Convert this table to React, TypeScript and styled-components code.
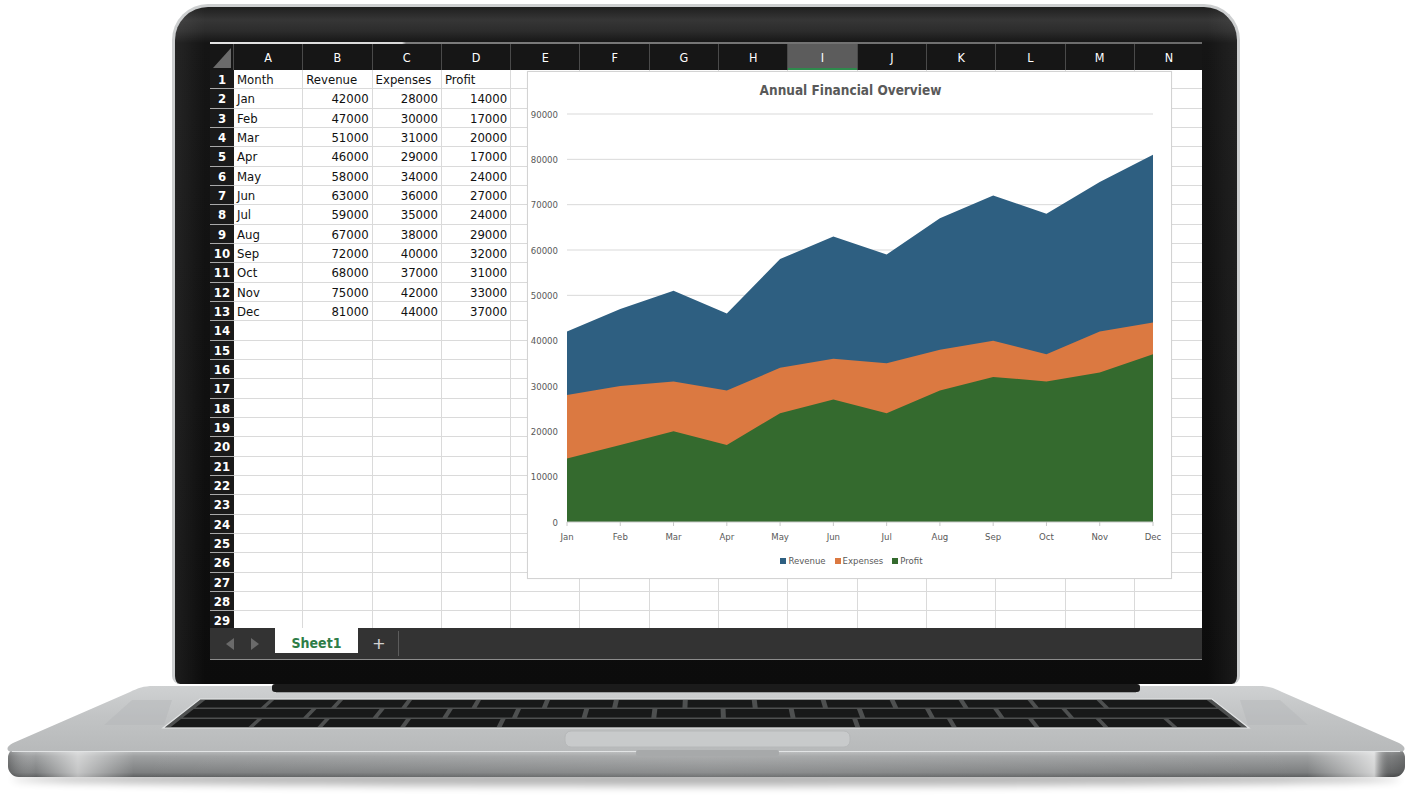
import React from "react";
import styled, { createGlobalStyle } from "styled-components";

const FONT = `"Liberation Sans Narrow", "DejaVu Sans Condensed", "Liberation Sans", sans-serif`;

const COLUMNS = ["A", "B", "C", "D", "E", "F", "G", "H", "I", "J", "K", "L", "M", "N"];
const SELECTED_COLUMN = "I";
const ROW_COUNT = 29;
const ROW_HEAD_WIDTH = 24;
const COL_WIDTH = 69.3;
const ROW_HEIGHT = 19.33;

const DATA = [
    { month: "Jan", revenue: 42000, expenses: 28000, profit: 14000 },
    { month: "Feb", revenue: 47000, expenses: 30000, profit: 17000 },
    { month: "Mar", revenue: 51000, expenses: 31000, profit: 20000 },
    { month: "Apr", revenue: 46000, expenses: 29000, profit: 17000 },
    { month: "May", revenue: 58000, expenses: 34000, profit: 24000 },
    { month: "Jun", revenue: 63000, expenses: 36000, profit: 27000 },
    { month: "Jul", revenue: 59000, expenses: 35000, profit: 24000 },
    { month: "Aug", revenue: 67000, expenses: 38000, profit: 29000 },
    { month: "Sep", revenue: 72000, expenses: 40000, profit: 32000 },
    { month: "Oct", revenue: 68000, expenses: 37000, profit: 31000 },
    { month: "Nov", revenue: 75000, expenses: 42000, profit: 33000 },
    { month: "Dec", revenue: 81000, expenses: 44000, profit: 37000 },
];

const SERIES = [
    { key: "revenue" as const, label: "Revenue", color: "#2e5f81" },
    { key: "expenses" as const, label: "Expenses", color: "#db7941" },
    { key: "profit" as const, label: "Profit", color: "#346a2e" },
];

const GlobalStyle = createGlobalStyle`
    html, body {
        margin: 0;
        padding: 0;
        background: #ffffff;
    }
    body {
        font-family: ${FONT};
    }
`;

const Page = styled.div`
    width: 1412px;
    height: 800px;
    overflow: hidden;
    display: flex;
    flex-direction: column;
    align-items: center;
`;

const Lid = styled.div`
    box-sizing: border-box;
    width: 1068px;
    height: 680px;
    margin-top: 4px;
    padding: 35px 35px 0;
    border: 3px solid #cdcfd0;
    border-bottom: none;
    border-radius: 36px 36px 8px 8px;
    background:
        linear-gradient(90deg, rgba(255, 255, 255, 0.07) 0px, rgba(255, 255, 255, 0) 30px,
            rgba(255, 255, 255, 0) 1032px, rgba(255, 255, 255, 0.06) 1062px),
        linear-gradient(180deg, #1f1f1f 0px, #363636 13px, #2c2c2c 24px, #151515 36px, #0c0c0c 100%);
`;

const Screen = styled.div`
    width: 992px;
    height: 618px;
    display: flex;
    flex-direction: column;
    overflow: hidden;
    background: #ffffff;
`;

const TopEdge = styled.div`
    height: 2px;
    background: linear-gradient(90deg, #e4e4e4 0px, #d8d8d8 192px, #7c7c7c 196px, #6a6a6a 100%);
`;

const HeaderRow = styled.div`
    display: grid;
    grid-template-columns: ${ROW_HEAD_WIDTH}px repeat(${COLUMNS.length}, ${COL_WIDTH}px);
    height: 26px;
    background: #161616;
`;

const CornerCell = styled.div`
    position: relative;
    border-right: 1px solid #4a4a4a;
    &::after {
        content: "";
        position: absolute;
        right: 2px;
        bottom: 2px;
        width: 18px;
        height: 20px;
        background: #6b6b6b;
        clip-path: polygon(100% 0, 100% 100%, 0 100%);
    }
`;

const ColumnHead = styled.div<{ $selected?: boolean }>`
    box-sizing: border-box;
    display: flex;
    align-items: center;
    justify-content: center;
    color: #ffffff;
    font-size: 12.5px;
    border-right: 1px solid #4a4a4a;
    background: ${(p) => (p.$selected ? "#5c5c5c" : "transparent")};
    box-shadow: ${(p) => (p.$selected ? "inset 0 -2px 0 #2e8a4c" : "none")};
`;

const SheetArea = styled.div`
    position: relative;
    height: 558px;
    overflow: hidden;
    background: #ffffff;
`;

const CellGrid = styled.div`
    display: grid;
    grid-template-columns: ${ROW_HEAD_WIDTH}px repeat(${COLUMNS.length}, ${COL_WIDTH}px);
    grid-auto-rows: ${ROW_HEIGHT}px;
`;

const RowHead = styled.div`
    box-sizing: border-box;
    display: flex;
    align-items: center;
    justify-content: center;
    padding-top: 1px;
    background: #1a1a1a;
    color: #ffffff;
    font-size: 13px;
    font-weight: 700;
    border-bottom: 1px solid #a9a9a9;
`;

const Cell = styled.div<{ $align?: "left" | "right" }>`
    box-sizing: border-box;
    padding: 1px 3px 0;
    font-size: 13px;
    line-height: 18px;
    color: #111111;
    text-align: ${(p) => p.$align ?? "left"};
    white-space: nowrap;
    overflow: hidden;
    border-right: 1px solid #dadada;
    border-bottom: 1px solid #dadada;
`;

const ChartBox = styled.div`
    position: absolute;
    left: 317px;
    top: 1px;
    box-sizing: border-box;
    width: 645px;
    height: 508px;
    display: flex;
    flex-direction: column;
    align-items: center;
    background: #ffffff;
    border: 1px solid #d3d3d3;
    box-shadow: 0 0 1px rgba(0, 0, 0, 0.08);
`;

const ChartTitle = styled.div`
    padding-top: 9px;
    margin-left: 2px;
    font-size: 13.5px;
    line-height: 18px;
    font-weight: 700;
    color: #595959;
`;

const PlotSvg = styled.svg`
    display: block;
    flex: none;
`;

const Legend = styled.div`
    display: flex;
    gap: 9px;
    margin-top: 6px;
    margin-left: 4px;
    font-size: 9.5px;
    line-height: 12px;
    color: #595959;
`;

const LegendItem = styled.div`
    display: flex;
    align-items: center;
    gap: 2px;
`;

const Swatch = styled.span<{ $color: string }>`
    width: 6px;
    height: 6px;
    background: ${(p) => p.$color};
`;

const TabBar = styled.div`
    box-sizing: border-box;
    height: 32px;
    display: flex;
    align-items: flex-start;
    background: #333333;
    border-bottom: 1px solid #8c8c8c;
`;

const NavArrows = styled.div`
    width: 65px;
    height: 31px;
    display: flex;
    align-items: center;
    justify-content: center;
    gap: 17px;
`;

const Arrow = styled.span<{ $dir: "left" | "right" }>`
    width: 0;
    height: 0;
    border-top: 6px solid transparent;
    border-bottom: 6px solid transparent;
    ${(p) =>
        p.$dir === "left"
            ? "border-right: 8px solid #6a6a6a;"
            : "border-left: 8px solid #6a6a6a;"}
`;

const SheetTab = styled.div`
    box-sizing: border-box;
    width: 83px;
    height: 25px;
    padding-top: 4px;
    display: flex;
    align-items: center;
    justify-content: center;
    background: #ffffff;
    color: #2e7d47;
    font-size: 14px;
    font-weight: 700;
`;

const AddSheet = styled.div`
    box-sizing: border-box;
    width: 41px;
    height: 25px;
    margin-top: 3px;
    padding-left: 2px;
    display: flex;
    align-items: center;
    justify-content: center;
    color: #cfcfcf;
    font-family: "Liberation Sans", sans-serif;
    font-size: 21px;
    font-weight: 300;
    border-right: 1px solid #5c5c5c;
`;

const BaseSvg = styled.svg`
    display: block;
    flex: none;
`;

/* chart geometry, in the chart box's content coordinates */
const PLOT_LEFT = 39;
const PLOT_RIGHT = 625;
const PLOT_BOTTOM = 450;
const PLOT_TOP = 42;
const MAX_VALUE = 90000;

const xAt = (i: number) => PLOT_LEFT + (i * (PLOT_RIGHT - PLOT_LEFT)) / (DATA.length - 1);
const yAt = (v: number) => PLOT_BOTTOM - (v * (PLOT_BOTTOM - PLOT_TOP)) / MAX_VALUE;

const areaPath = (key: "revenue" | "expenses" | "profit") => {
    const pts = DATA.map((d, i) => `${xAt(i).toFixed(2)},${yAt(d[key]).toFixed(2)}`);
    return `M${PLOT_LEFT},${PLOT_BOTTOM} L${pts.join(" L")} L${PLOT_RIGHT},${PLOT_BOTTOM} Z`;
};

const AreaChart: React.FC = () => {
    const ticks = [0, 10000, 20000, 30000, 40000, 50000, 60000, 70000, 80000, 90000];
    return (
        <PlotSvg width={643} height={450} viewBox="0 27 643 450">
            {ticks.slice(1).map((v) => (
                <line key={v} x1={PLOT_LEFT} x2={PLOT_RIGHT} y1={yAt(v)} y2={yAt(v)} stroke="#d9d9d9" strokeWidth={1} />
            ))}
            {SERIES.map((s) => (
                <path key={s.key} d={areaPath(s.key)} fill={s.color} />
            ))}
            <line x1={PLOT_LEFT} x2={PLOT_RIGHT} y1={PLOT_BOTTOM} y2={PLOT_BOTTOM} stroke="#c8c8c8" strokeWidth={1} />
            {DATA.map((d, i) => (
                <line key={d.month} x1={xAt(i)} x2={xAt(i)} y1={PLOT_BOTTOM} y2={PLOT_BOTTOM + 4} stroke="#c8c8c8" strokeWidth={1} />
            ))}
            <g fontFamily={FONT} fontSize={9.5} fill="#595959">
                {ticks.map((v) => (
                    <text key={v} x={30} y={yAt(v) + 3.5} textAnchor="end">
                        {v}
                    </text>
                ))}
                {DATA.map((d, i) => (
                    <text key={d.month} x={xAt(i)} y={468} textAnchor="middle">
                        {d.month}
                    </text>
                ))}
            </g>
        </PlotSvg>
    );
};

const KEY_ROWS = [
    { top: 700, bottom: 707.5, keys: [1, 1, 1, 1, 1, 1, 1, 1, 1, 1, 1, 1, 1, 1.6] },
    { top: 709, bottom: 717.5, keys: [1.8, 1, 1, 1, 1, 1, 1, 1, 1, 1, 1, 1, 2.3] },
    { top: 719, bottom: 727, keys: [1.2, 1, 1.2, 1.4, 5.2, 1.4, 1.2, 1, 1, 1] },
];

const WELL_TOP = 699;
const WELL_BOTTOM = 728;
const edgeLeft = (y: number) => 200 - ((y - WELL_TOP) * 37) / (WELL_BOTTOM - WELL_TOP);
const edgeRight = (y: number) => 1212 + ((y - WELL_TOP) * 37) / (WELL_BOTTOM - WELL_TOP);

const keyPolygon = (f0: number, f1: number, top: number, bottom: number) => {
    const at = (f: number, y: number) => edgeLeft(y) + 4 + f * (edgeRight(y) - edgeLeft(y) - 8);
    const g = 2.5;
    return [
        `${at(f0, top) + g},${top}`,
        `${at(f1, top) - g},${top}`,
        `${at(f1, bottom) - g},${bottom}`,
        `${at(f0, bottom) + g},${bottom}`,
    ].join(" ");
};

const LaptopBase: React.FC = () => (
    <BaseSvg width={1412} height={116} viewBox="0 684 1412 116">
        <defs>
            <linearGradient id="deck" x1="0" y1="0" x2="0" y2="1">
                <stop offset="0" stopColor="#cfd1d2" />
                <stop offset="0.45" stopColor="#c2c4c5" />
                <stop offset="1" stopColor="#b7b9ba" />
            </linearGradient>
            <linearGradient id="edge" x1="0" y1="0" x2="0" y2="1">
                <stop offset="0" stopColor="#cfd1d2" />
                <stop offset="0.3" stopColor="#9fa1a2" />
                <stop offset="0.85" stopColor="#7d7f80" />
                <stop offset="1" stopColor="#5e6061" />
            </linearGradient>
            <linearGradient id="edgeShine" x1="0" y1="0" x2="1" y2="0">
                <stop offset="0" stopColor="#000" stopOpacity="0.25" />
                <stop offset="0.02" stopColor="#fff" stopOpacity="0" />
                <stop offset="0.05" stopColor="#fff" stopOpacity="0.55" />
                <stop offset="0.09" stopColor="#fff" stopOpacity="0" />
                <stop offset="0.5" stopColor="#fff" stopOpacity="0.12" />
                <stop offset="0.93" stopColor="#fff" stopOpacity="0" />
                <stop offset="0.978" stopColor="#fff" stopOpacity="0.65" />
                <stop offset="0.99" stopColor="#000" stopOpacity="0.2" />
                <stop offset="1" stopColor="#000" stopOpacity="0.3" />
            </linearGradient>
            <filter id="soft" x="-10%" y="-200%" width="120%" height="500%">
                <feGaussianBlur stdDeviation="4" />
            </filter>
        </defs>
        <ellipse cx={706} cy={779} rx={694} ry={7} fill="#000" opacity={0.3} filter="url(#soft)" />
        <rect x={8} y={747} width={1397} height={30} rx={11} fill="url(#edge)" />
        <rect x={8} y={747} width={1397} height={30} rx={11} fill="url(#edgeShine)" />
        <path
            d="M153,686 L1259,686 C1268,686 1274,688 1282,692 L1399,743 C1407,747 1406,752 1398,752 L14,752 C6,752 5,747 13,743 L130,692 C138,688 144,686 153,686 Z"
            fill="url(#deck)"
        />
        <line x1={12} x2={1400} y1={751.5} y2={751.5} stroke="#e2e4e5" strokeWidth={1} />
        <polygon points="132,700 172,700 164,725 104,725" fill="#b4b6b7" opacity={0.45} />
        <polygon points="1240,700 1280,700 1308,725 1248,725" fill="#b4b6b7" opacity={0.45} />
        <rect x={272} y={684} width={868} height={8} rx={3} fill="#1b1b1b" />
        <line x1={276} x2={1136} y1={692.5} y2={692.5} stroke="#9c9e9f" strokeWidth={1} />
        <polygon points="200,699 1212,699 1249,728 163,728" fill="#4e5050" stroke="#e3e5e6" strokeWidth={1.2} />
        {KEY_ROWS.map((row) => {
            const total = row.keys.reduce((a, b) => a + b, 0);
            let acc = 0;
            return row.keys.map((w, i) => {
                const f0 = acc / total;
                acc += w;
                const f1 = acc / total;
                return <polygon key={`${row.top}-${i}`} points={keyPolygon(f0, f1, row.top, row.bottom)} fill="#181919" />;
            });
        })}
        <rect x={565} y={731} width={285} height={16} rx={6} fill="#c8cacb" stroke="#b6b8b9" strokeWidth={1} />
        <rect x={636} y={750} width={143} height={6} rx={2} fill="#a7a9aa" />
    </BaseSvg>
);

const renderRow = (rowIndex: number) => {
    const cells: React.ReactNode[] = [];
    const header = rowIndex === 0;
    const record = DATA[rowIndex - 1];
    COLUMNS.forEach((col, ci) => {
        let text = "";
        let align: "left" | "right" = "left";
        if (header) {
            text = ["Month", "Revenue", "Expenses", "Profit"][ci] ?? "";
        } else if (record) {
            if (ci === 0) text = record.month;
            if (ci === 1) text = String(record.revenue);
            if (ci === 2) text = String(record.expenses);
            if (ci === 3) text = String(record.profit);
            if (ci > 0) align = "right";
        }
        cells.push(
            <Cell key={`${rowIndex}-${col}`} $align={align}>
                {text}
            </Cell>
        );
    });
    return (
        <React.Fragment key={rowIndex}>
            <RowHead>{rowIndex + 1}</RowHead>
            {cells}
        </React.Fragment>
    );
};

const App: React.FC = () => {
    return (
        <>
            <GlobalStyle />
            <Page>
                <Lid>
                    <Screen>
                        <TopEdge />
                        <HeaderRow>
                            <CornerCell />
                            {COLUMNS.map((c) => (
                                <ColumnHead key={c} $selected={c === SELECTED_COLUMN}>
                                    {c}
                                </ColumnHead>
                            ))}
                        </HeaderRow>
                        <SheetArea>
                            <CellGrid>{Array.from({ length: ROW_COUNT }, (_, i) => renderRow(i))}</CellGrid>
                            <ChartBox>
                                <ChartTitle>Annual Financial Overview</ChartTitle>
                                <AreaChart />
                                <Legend>
                                    {SERIES.map((s) => (
                                        <LegendItem key={s.key}>
                                            <Swatch $color={s.color} />
                                            {s.label}
                                        </LegendItem>
                                    ))}
                                </Legend>
                            </ChartBox>
                        </SheetArea>
                        <TabBar>
                            <NavArrows>
                                <Arrow $dir="left" />
                                <Arrow $dir="right" />
                            </NavArrows>
                            <SheetTab>Sheet1</SheetTab>
                            <AddSheet>+</AddSheet>
                        </TabBar>
                    </Screen>
                </Lid>
                <LaptopBase />
            </Page>
        </>
    );
};

export default App;
